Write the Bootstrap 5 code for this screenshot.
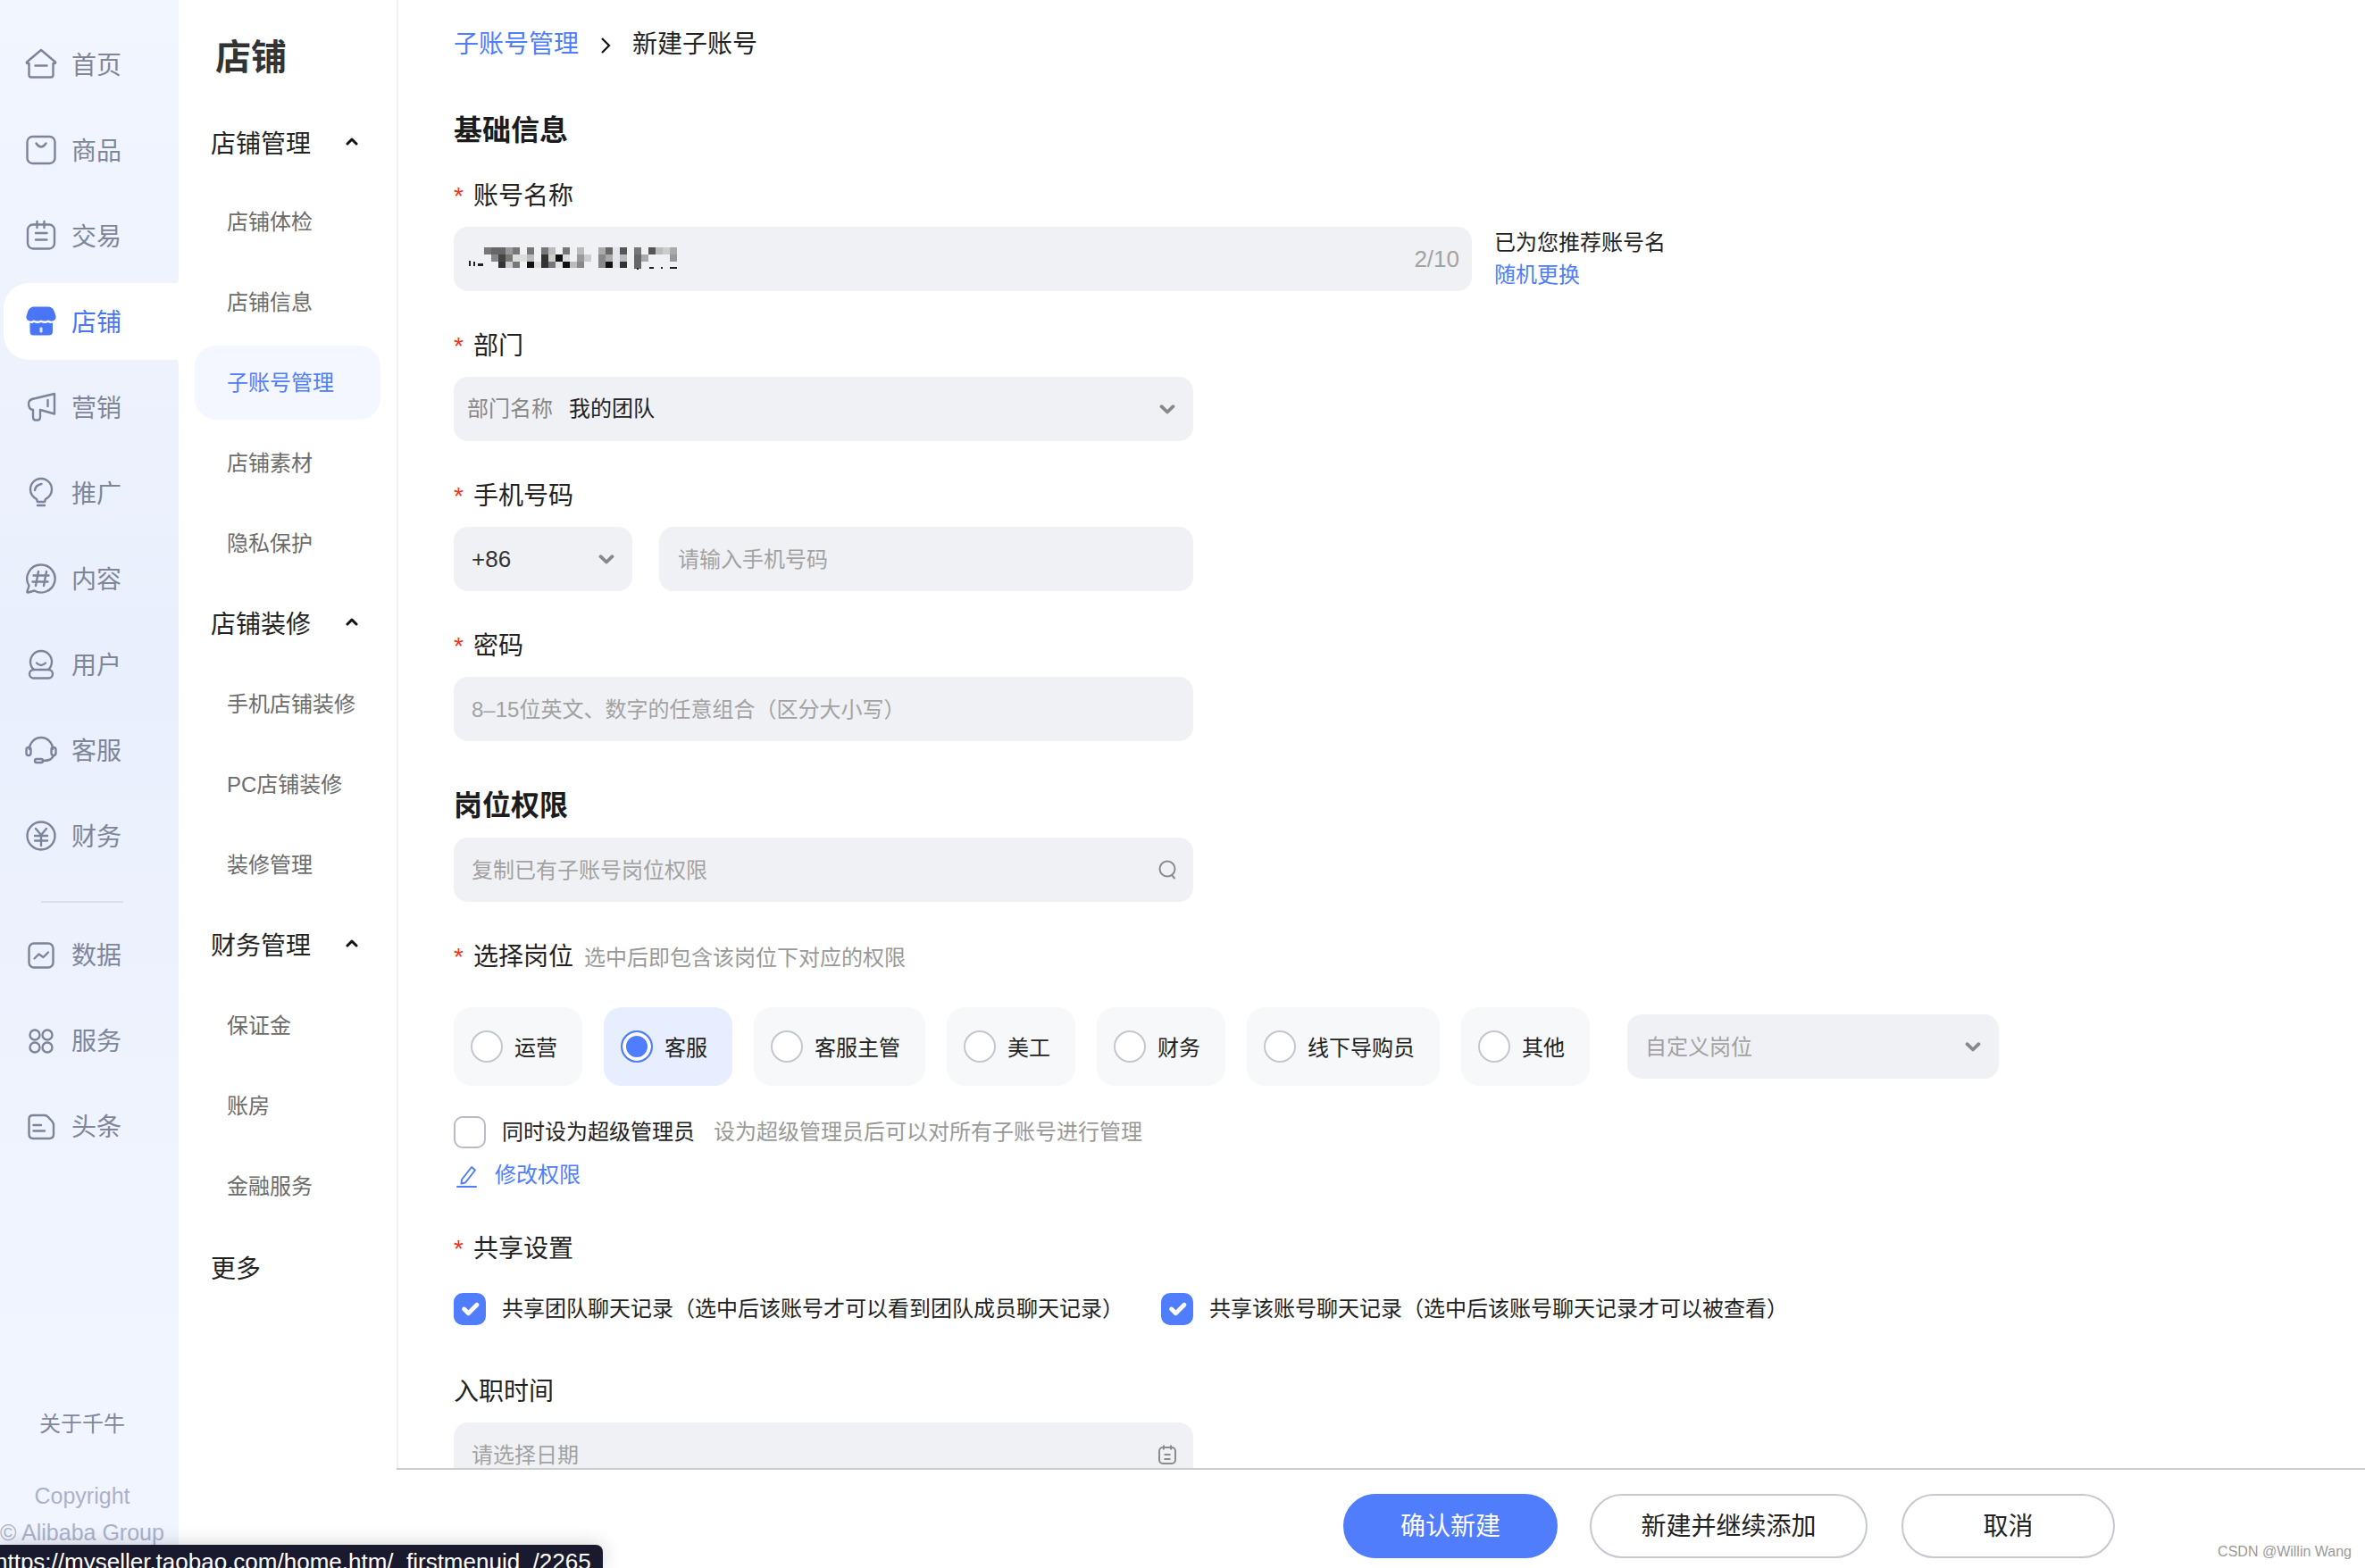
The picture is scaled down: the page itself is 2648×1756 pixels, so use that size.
<!DOCTYPE html>
<html lang="zh-CN">
<head>
<meta charset="utf-8">
<title>新建子账号</title>
<link rel="stylesheet" href="https://cdn.jsdelivr.net/npm/bootstrap@5.3.0/dist/css/bootstrap.min.css">
<style>
:root{--blue:#4f7dfb;--fld:#f0f1f5}
html,body{height:100%;overflow:hidden}
body{font-family:"Liberation Sans","Noto Sans CJK SC",sans-serif;color:#222;background:#fff}
.shell{height:1756px;overflow:hidden}
.rail{width:200px;flex:none;background:linear-gradient(180deg,#f2f6ff 0,#e9effc 42%,#eef3fe 70%,#f1f5ff 89%,#f1f5ff 100%)}
.rail-nav{padding-top:24px}
.rail-item{height:86px;margin:5px 0 5px 4px;padding:0 0 0 24px;gap:16px;font-size:28px;color:#7d869b;border-radius:28px 0 0 28px;position:relative}
.rail-item:hover{color:#7d869b}
.rail-item span{padding-top:3px}
.rail-item svg{width:36px;height:36px;flex:none;fill:none;stroke:#7b8499;stroke-width:2.4;stroke-linecap:round;stroke-linejoin:round}
.rail-item.on{background:#fff;color:#4a76f6}
.rail-item.on:hover{color:#4a76f6}
.rail-item.on::before,.rail-item.on::after{content:"";position:absolute;right:0;width:14px;height:6px}
.rail-item.on::before{top:-6px;background:radial-gradient(circle at 0 0,transparent 13.5px,#fff 14.5px)}
.rail-item.on::after{bottom:-6px;background:radial-gradient(circle at 0 100%,transparent 13.5px,#fff 14.5px)}
.rail-rule{height:2px;width:92px;margin:25px 0 10px 46px;background:#d9dee8;border:0;opacity:1}
.rail-foot{padding:0 16px 0 0;text-align:center;white-space:nowrap;margin-top:auto}
.rail-about{font-size:24px;line-height:36px;color:#7f889d;margin-bottom:42px}
.rail-copy{font-size:25px;line-height:40px;color:#a9b2cb;height:40px}
.rail-copy+.rail-copy{margin-top:1px;margin-bottom:20px}
.subcol{width:244px;flex:none}
.sub-title{height:115px;padding:34px 0 0 41px;font-size:40px;line-height:60px;font-weight:700;color:#333}
.sub-head{height:90px;padding:4px 43px 0 36px;font-size:28px;color:#222}
.sub-head.lead-head{margin-bottom:-2px;padding-top:3px}
.sub-head svg{width:14px;height:10px;fill:none;stroke:#111;stroke-width:3;stroke-linecap:round;stroke-linejoin:round;margin-top:-8px}
.sub-more{margin-top:2px}
.sub-link{height:83px;margin:3.5px 0 3.5px 18px;width:208px;padding:2px 0 0 36px;font-size:24px;color:#6c6c6c;border-radius:24px}
.sub-link:hover{color:#6c6c6c}
.sub-link.on{background:#f4f7ff;color:var(--blue)}
.sub-link.on:hover{color:var(--blue)}
.workarea{height:1644px;overflow:hidden;border-left:2px solid #f0f1f6;padding:30px 0 0 62px}
.crumbs{--bs-breadcrumb-margin-bottom:0;font-size:28px;line-height:40px}
.crumbs a{color:var(--blue);text-decoration:none}
.crumbs .breadcrumb-item+.breadcrumb-item{padding-left:24px;color:#222}
.crumbs .breadcrumb-item+.breadcrumb-item::before{content:"";float:none;display:inline-block;width:12px;height:20px;padding:0;margin-right:24px;vertical-align:-2px;background:url("data:image/svg+xml,%3Csvg xmlns='http://www.w3.org/2000/svg' viewBox='0 0 12 20'%3E%3Cpath d='M2 2l8 8-8 8' fill='none' stroke='%23111' stroke-width='2.2'/%3E%3C/svg%3E") no-repeat center/contain}
.sect-title{font-size:32px;height:44px;line-height:47px;font-weight:700;color:#1c1c1c;margin:0}
.t1{margin-top:53px;margin-bottom:31px}
.t2{margin-top:50px;margin-bottom:14px;line-height:45px}
.fld-label{font-size:28px;height:40px;line-height:43px;margin:0 0 16px;display:block;color:#222}
.req{color:#f0341f;font-size:28px;margin-right:11px;display:inline-block;width:11px}
.hint{font-size:24px;color:#999;margin-left:12px}
.fld-gap{margin-bottom:40px}
.form-control,.form-select{height:72px;border:0;border-radius:16px;background-color:var(--fld);font-size:24px;color:#222;box-shadow:none}
.form-control{padding:1px 20px 0}
.form-control::placeholder{color:#a2a2a2;opacity:1}
.form-select{padding:0 40px 0 20px;line-height:72px;background-image:url("data:image/svg+xml,%3Csvg xmlns='http://www.w3.org/2000/svg' viewBox='0 0 18 11'%3E%3Cpath d='M2.500 2.200l6.500 6.300L15.500 2.200' fill='none' stroke='%23888' stroke-width='3.800' stroke-linecap='round' stroke-linejoin='round'/%3E%3C/svg%3E");background-position:right 20px center;background-size:18px 11px}
.w-name{width:1140px}
.w-mid{width:828px}
.w-code{width:200px;font-size:26px;color:#333}
.w-phone{width:598px;padding-left:21px}
.name-box{height:72px;border-radius:16px;background:var(--fld);padding-right:14px;font-size:26px;color:#a2a2a2}
.mosaic{width:270px;height:60px;margin-left:2px;filter:blur(.7px)}
.helper{margin-left:25px;font-size:24px;line-height:36px;color:#222}
.helper a,.edit-link{color:var(--blue);text-decoration:none}
.dept-key{color:#888;margin-right:18px}
.dept{padding-left:15px}
.fld-icon{position:absolute;right:18px;top:24px;width:22px;height:24px;fill:none;stroke:#8b8b8b;stroke-width:2}
.mt-38{margin-top:38px}
.post{height:88px;padding:0 28px 0 19px;gap:12px;border-radius:20px;background:#f7f8fa;font-size:24px;color:#222;margin:0;flex:none}
.post span{padding-top:4px;min-width:0}
.post.on{background:#e6eeff}
.form-check-input{margin:0;flex:none;border:2px solid #c4c7ce;background-color:#fff;box-shadow:none}
.post .form-check-input{width:36px;height:36px;margin:0 1px 0 0;float:none}
.post .form-check-input:checked{background-color:var(--blue);background-image:none;border-color:var(--blue);box-shadow:inset 0 0 0 4px #fff}
.sq{width:36px;height:36px;border-radius:10px!important;border-color:#b9bcc6}
.sq:checked{background-color:var(--blue);border-color:var(--blue)}
.w-custom{width:416px;margin-left:18px;color:#a2a2a2;flex:none;line-height:74px}
.chk-row{margin-top:34px;font-size:24px;gap:18px;height:36px}
.chk-desc{color:#999;margin-left:3px}
.edit-link{margin-top:12px;height:36px;font-size:24px;gap:19px}
.edit-link svg{width:25px;height:30px;fill:none;stroke:var(--blue);stroke-width:2;stroke-linejoin:round;stroke-linecap:round;margin-left:2px}
.share-label{margin:43px 0 31px}
.share-row{font-size:24px;gap:42px}
.share-item{gap:18px;height:36px}
.join-label{margin-top:53px}
.actionbar{height:112px;border-top:2px solid #ccc;padding:27px 280px 0 0;gap:36px;position:relative;background:#fff}
.act{height:72px;border-radius:36px;font-size:28px;padding:2px 0 0;border:2px solid #c5c8d0;color:#222;background:#fff}
.act-main{width:240px;background:var(--blue);border-color:var(--blue);color:#fff}
.act-next{width:311px;margin-right:2px}
.act-off{width:239px}
.mark-csdn{position:absolute;right:15px;bottom:8px;font-size:16px;line-height:20px;color:#9a9a9a}
.urlbar{position:absolute;left:0;bottom:0;width:675px;height:26px;background:#1a1a2e;border-radius:0 8px 0 0;color:#fff;font-size:26px;line-height:38px;overflow:hidden;white-space:nowrap;box-shadow:0 0 22px rgba(0,0,0,.18);text-indent:-6px}
</style>
</head>
<body>
<div class="shell d-flex position-relative">

  <aside class="rail d-flex flex-column">
    <nav class="rail-nav nav flex-column">
      <a class="rail-item nav-link d-flex align-items-center" href="#"><svg viewBox="0 0 36 36"><path d="M18 2L2 15.500Q1.300 17 3 17H4.500V30q0 2.500 2.500 2.500H29q2.500 0 2.500-2.500V17H33q1.700 0 1-1.500Z"/><path d="M11.500 19.500H24.500"/></svg><span>首页</span></a>
      <a class="rail-item nav-link d-flex align-items-center" href="#"><svg viewBox="0 0 36 36"><rect x="2.500" y="3" width="31" height="30" rx="6"/><path d="M12.500 10.500q5.500 8 11 0"/></svg><span>商品</span></a>
      <a class="rail-item nav-link d-flex align-items-center" href="#"><svg viewBox="0 0 36 36"><rect x="3" y="5.500" width="30" height="27" rx="6"/><path d="M13.500 2v7M21.500 2v7M12 15H24.500M12 22.500H24.500"/></svg><span>交易</span></a>
      <a class="rail-item on nav-link d-flex align-items-center" href="#"><svg viewBox="0 0 36 36" style="stroke:none"><path fill="#4a76f6" d="M10 1.500H26Q30.500 1.500 32.500 6L34.500 12Q35 16 32 17Q29.500 18.500 26 16.500Q22 18.500 18 16.500Q14 18.500 10 16.500Q6.500 18.500 4 17Q1 16 1.500 12L3.500 6Q5.500 1.500 10 1.500Z"/><path fill="#4a76f6" d="M5.500 19.500Q8 20.500 10 19Q14 21 18 19Q22 21 26 19Q28 20.500 31 19.500V29Q31 33.500 26.500 33.500H9.500Q5.500 33.500 5.500 29Z"/><rect x="16.500" y="24.500" width="3" height="6" rx="1" fill="#dfe8ff"/></svg><span>店铺</span></a>
      <a class="rail-item nav-link d-flex align-items-center" href="#"><svg viewBox="0 0 36 36"><path d="M33 3L12 8Q4 9 4 14Q4 20.500 9 21V29Q9 32.500 12 32.500H14Q17 32.500 17 29V21L33 25.500Z"/><path d="M25.500 10V17"/></svg><span>营销</span></a>
      <a class="rail-item nav-link d-flex align-items-center" href="#"><svg viewBox="0 0 36 36"><path d="M13 25Q6 21 6 14A12 12 0 1 1 30 14Q30 21 23 25L22 28H14Z"/><path d="M14 32H22M11 15Q12 9 18.500 8"/></svg><span>推广</span></a>
      <a class="rail-item nav-link d-flex align-items-center" href="#"><svg viewBox="0 0 36 36"><path d="M18 2.500A15.500 15.500 0 1 1 10.500 31.500L3.500 33.500Q1.500 33.500 2.800 31.500L4.500 26A15.500 15.500 0 0 1 18 2.500Z"/><path d="M15 10L12 26M24 10L21 26M9.500 14.500H26.500M8.500 21.500H25.500"/></svg><span>内容</span></a>
      <a class="rail-item nav-link d-flex align-items-center" href="#"><svg viewBox="0 0 36 36"><path d="M10 24A12 12 0 1 1 26 24"/><rect x="5" y="24" width="26" height="9.500" rx="4.750"/><path d="M13 16.500q5 5 10 0"/></svg><span>用户</span></a>
      <a class="rail-item nav-link d-flex align-items-center" href="#"><svg viewBox="0 0 36 36"><path d="M5 17A13 13 0 0 1 31 17"/><rect x="1.500" y="15" width="5" height="9" rx="2.500"/><rect x="29.500" y="15" width="5" height="9" rx="2.500"/><path d="M32 24Q30 30 20 30"/><rect x="11" y="28" width="9" height="4" rx="2"/></svg><span>客服</span></a>
      <a class="rail-item nav-link d-flex align-items-center" href="#"><svg viewBox="0 0 36 36"><circle cx="18" cy="18" r="15.500"/><path d="M12 10L18 17L24 10M11 18H25M11 23.500H25M18 17V29"/></svg><span>财务</span></a>
      <hr class="rail-rule">
      <a class="rail-item nav-link d-flex align-items-center" href="#"><svg viewBox="0 0 36 36"><rect x="4.500" y="5.500" width="27" height="27" rx="5.500"/><path d="M10.500 22.500L15.500 17.500L20.500 21L26 15.500"/></svg><span>数据</span></a>
      <a class="rail-item nav-link d-flex align-items-center" href="#"><svg viewBox="0 0 36 36"><circle cx="11" cy="12" r="5.500"/><circle cx="25" cy="12" r="5.500"/><circle cx="11" cy="26" r="5.500"/><circle cx="25" cy="26" r="5.500"/></svg><span>服务</span></a>
      <a class="rail-item nav-link d-flex align-items-center" href="#"><svg viewBox="0 0 36 36"><path d="M9 6H22Q24 6 26 8L30.500 13Q32 15 32 17V27Q32 32 27 32H9Q4.500 32 4.500 27V10Q4.500 6 9 6Z"/><path d="M9.500 17H18M9.500 23.500H22"/></svg><span>头条</span></a>
    </nav>
    <div class="rail-foot">
      <div class="rail-about">关于千牛</div>
      <div class="rail-copy">Copyright</div>
      <div class="rail-copy">© Alibaba Group</div>
    </div>
  </aside>

  <aside class="subcol">
    <div class="sub-title">店铺</div>
    <nav class="nav flex-column">
      <div class="sub-head lead-head d-flex align-items-center justify-content-between">店铺管理<svg viewBox="0 0 14 10"><path d="M2 8l5-5 5 5"/></svg></div>
      <a class="sub-link nav-link d-flex align-items-center" href="#">店铺体检</a>
      <a class="sub-link nav-link d-flex align-items-center" href="#">店铺信息</a>
      <a class="sub-link on nav-link d-flex align-items-center" href="#">子账号管理</a>
      <a class="sub-link nav-link d-flex align-items-center" href="#">店铺素材</a>
      <a class="sub-link nav-link d-flex align-items-center" href="#">隐私保护</a>
      <div class="sub-head d-flex align-items-center justify-content-between">店铺装修<svg viewBox="0 0 14 10"><path d="M2 8l5-5 5 5"/></svg></div>
      <a class="sub-link nav-link d-flex align-items-center" href="#">手机店铺装修</a>
      <a class="sub-link nav-link d-flex align-items-center" href="#">PC店铺装修</a>
      <a class="sub-link nav-link d-flex align-items-center" href="#">装修管理</a>
      <div class="sub-head d-flex align-items-center justify-content-between">财务管理<svg viewBox="0 0 14 10"><path d="M2 8l5-5 5 5"/></svg></div>
      <a class="sub-link nav-link d-flex align-items-center" href="#">保证金</a>
      <a class="sub-link nav-link d-flex align-items-center" href="#">账房</a>
      <a class="sub-link nav-link d-flex align-items-center" href="#">金融服务</a>
      <div class="sub-head sub-more d-flex align-items-center">更多</div>
    </nav>
  </aside>

  <main class="flex-grow-1 d-flex flex-column">
    <div class="workarea">
      <nav><ol class="breadcrumb crumbs">
        <li class="breadcrumb-item"><a href="#">子账号管理</a></li>
        <li class="breadcrumb-item active">新建子账号</li>
      </ol></nav>

      <h2 class="sect-title t1">基础信息</h2>

      <label class="fld-label"><span class="req">*</span>账号名称</label>
      <div class="d-flex fld-gap">
        <div class="name-box w-name d-flex align-items-center justify-content-between">
          <svg class="mosaic" viewBox="0 0 270 60">
            <g fill="#777"><rect x="32" y="17" width="8" height="8"/><rect x="64" y="17" width="8" height="8"/><rect x="80" y="17" width="8" height="8"/><rect x="96" y="17" width="8" height="8"/><rect x="120" y="17" width="8" height="8"/><rect x="200" y="17" width="8" height="8"/></g>
            <g fill="#666"><rect x="40" y="17" width="16" height="8"/><rect x="168" y="17" width="8" height="8"/><rect x="200" y="25" width="8" height="16"/></g>
            <g fill="#555"><rect x="184" y="17" width="8" height="8"/><rect x="216" y="17" width="8" height="8"/></g>
            <g fill="#999"><rect x="56" y="17" width="8" height="8"/><rect x="136" y="25" width="8" height="8"/><rect x="240" y="25" width="8" height="8"/></g>
            <g fill="#aaa"><rect x="160" y="17" width="8" height="8"/><rect x="240" y="17" width="8" height="8"/><rect x="168" y="25" width="8" height="8"/><rect x="208" y="25" width="8" height="8"/></g>
            <g fill="#bbb"><rect x="104" y="17" width="8" height="8"/><rect x="136" y="17" width="8" height="8"/><rect x="224" y="17" width="8" height="8"/><rect x="80" y="25" width="8" height="8"/><rect x="184" y="25" width="8" height="8"/><rect x="128" y="33" width="8" height="7"/></g>
            <g fill="#ccc"><rect x="232" y="17" width="8" height="8"/><rect x="104" y="25" width="8" height="8"/><rect x="144" y="25" width="8" height="8"/><rect x="56" y="33" width="8" height="7"/></g>
            <g fill="#888"><rect x="40" y="25" width="8" height="8"/><rect x="160" y="25" width="8" height="15"/><rect x="136" y="33" width="8" height="7"/></g>
            <g fill="#444"><rect x="48" y="25" width="8" height="8"/></g>
            <g fill="#777"><rect x="56" y="25" width="8" height="8"/><rect x="64" y="33" width="8" height="7"/><rect x="104" y="33" width="8" height="7"/></g>
            <g fill="#ddd"><rect x="64" y="25" width="8" height="8"/><rect x="72" y="25" width="8" height="8"/><rect x="120" y="25" width="8" height="8"/><rect x="88" y="33" width="8" height="7"/></g>
            <g fill="#333"><rect x="96" y="25" width="8" height="15"/><rect x="48" y="33" width="8" height="7"/><rect x="184" y="33" width="8" height="7"/></g>
            <g fill="#111"><rect x="112" y="25" width="8" height="8"/><rect x="80" y="33" width="8" height="7"/><rect x="120" y="33" width="8" height="7"/><rect x="168" y="33" width="8" height="7"/></g>
            <g fill="#e4e5ea"><rect x="176" y="17" width="8" height="23"/><rect x="112" y="33" width="8" height="7"/></g>
            <g fill="#222"><rect x="15" y="32" width="2" height="6"/><rect x="20" y="33" width="2" height="5"/><rect x="25" y="35" width="6" height="3"/><rect x="203" y="40" width="2" height="2"/><rect x="217" y="39" width="5" height="2"/><rect x="230" y="39" width="2" height="2"/><rect x="240" y="39" width="8" height="2"/></g>
          </svg>
          <span>2/10</span>
        </div>
        <div class="helper">已为您推荐账号名<br><a href="#">随机更换</a></div>
      </div>

      <label class="fld-label"><span class="req">*</span>部门</label>
      <div class="form-select dept w-mid fld-gap"><span class="dept-key">部门名称</span>我的团队</div>

      <label class="fld-label"><span class="req">*</span>手机号码</label>
      <div class="d-flex gap-0 fld-gap w-mid justify-content-between">
        <select class="form-select w-code"><option>+86</option></select>
        <input class="form-control w-phone" placeholder="请输入手机号码">
      </div>

      <label class="fld-label"><span class="req">*</span>密码</label>
      <input class="form-control w-mid" placeholder="8–15位英文、数字的任意组合（区分大小写）">

      <h2 class="sect-title t2">岗位权限</h2>
      <div class="position-relative w-mid fld-gap">
        <input class="form-control" placeholder="复制已有子账号岗位权限">
        <svg class="fld-icon" viewBox="0 0 22 24"><circle cx="11" cy="11" r="8.500"/><path d="M16 18l3 3.500" stroke-linecap="round"/></svg>
      </div>

      <label class="fld-label m-0"><span class="req">*</span>选择岗位<span class="hint">选中后即包含该岗位下对应的权限</span></label>

      <div class="d-flex align-items-center gap-4 mt-38">
        <label class="post form-check d-flex align-items-center"><input class="form-check-input" type="radio" name="post"><span>运营</span></label>
        <label class="post on form-check d-flex align-items-center"><input class="form-check-input" type="radio" name="post" checked><span>客服</span></label>
        <label class="post form-check d-flex align-items-center"><input class="form-check-input" type="radio" name="post"><span>客服主管</span></label>
        <label class="post form-check d-flex align-items-center"><input class="form-check-input" type="radio" name="post"><span>美工</span></label>
        <label class="post form-check d-flex align-items-center"><input class="form-check-input" type="radio" name="post"><span>财务</span></label>
        <label class="post form-check d-flex align-items-center"><input class="form-check-input" type="radio" name="post"><span>线下导购员</span></label>
        <label class="post form-check d-flex align-items-center"><input class="form-check-input" type="radio" name="post"><span>其他</span></label>
        <div class="form-select w-custom">自定义岗位</div>
      </div>

      <label class="chk-row d-flex align-items-center"><input class="form-check-input sq" type="checkbox"><span>同时设为超级管理员</span><span class="chk-desc">设为超级管理员后可以对所有子账号进行管理</span></label>
      <a class="edit-link d-flex align-items-center" href="#"><svg viewBox="0 0 25 30"><path d="M7 20L18 6l4 3.500L11 23.500L6.500 24.500Z"/><path d="M2 28H23"/></svg>修改权限</a>

      <label class="fld-label share-label"><span class="req">*</span>共享设置</label>
      <div class="share-row d-flex">
        <label class="share-item d-flex align-items-center"><input class="form-check-input sq" type="checkbox" checked>共享团队聊天记录（选中后该账号才可以看到团队成员聊天记录）</label>
        <label class="share-item d-flex align-items-center"><input class="form-check-input sq" type="checkbox" checked>共享该账号聊天记录（选中后该账号聊天记录才可以被查看）</label>
      </div>

      <label class="fld-label join-label">入职时间</label>
      <div class="position-relative w-mid">
        <input class="form-control" placeholder="请选择日期">
        <svg class="fld-icon" viewBox="0 0 22 24"><rect x="2" y="4" width="18" height="18" rx="4"/><path d="M7 1.500v5M15 1.500v5M7.500 12h7M7.500 17h7"/></svg>
      </div>
    </div>

    <div class="actionbar d-flex justify-content-end align-items-start">
      <button class="btn act act-main" type="button">确认新建</button>
      <button class="btn act act-next" type="button">新建并继续添加</button>
      <button class="btn act act-off" type="button">取消</button>
      <span class="mark-csdn">CSDN @Willin Wang</span>
    </div>
  </main>

  <div class="urlbar">https://myseller.taobao.com/home.htm/_firstmenuid_/2265</div>
</div>
<script src="https://cdn.jsdelivr.net/npm/bootstrap@5.3.0/dist/js/bootstrap.bundle.min.js"></script>
</body>
</html>
